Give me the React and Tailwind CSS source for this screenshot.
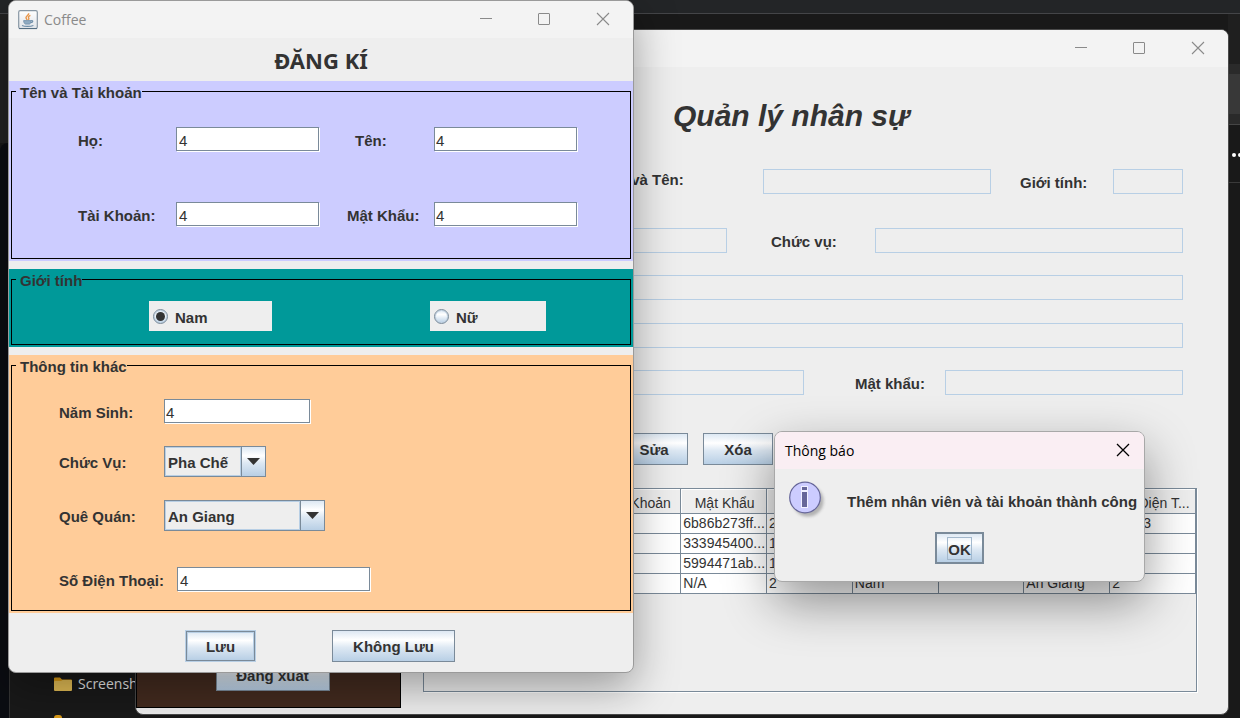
import React from "react";

const metal = "bg-[linear-gradient(180deg,#dde8f3_0%,#ffffff_30%,#dde8f3_55%,#b8cfe5_100%)]";
const metalButton = "border border-[#7a8a99] pt-0.5 font-bold " + metal;
const disabledField = "h-[25px] min-w-0 border border-[#b8cfe5] bg-transparent";

function WindowControls() {
  return (
    <div className="flex items-center self-start text-[#8a8a8a]">
      <button aria-label="Minimize" className="flex h-[35px] w-[58px] items-center justify-center">
        <svg width="14" height="14" viewBox="0 0 14 14" fill="none" stroke="currentColor">
          <path d="M1 6.500h12" />
        </svg>
      </button>
      <button aria-label="Maximize" className="flex h-[35px] w-[58px] items-center justify-center">
        <svg width="14" height="14" viewBox="0 0 14 14" fill="none" stroke="currentColor">
          <rect x="1.5" y="1.5" width="11" height="11" rx="0.5" />
        </svg>
      </button>
      <button aria-label="Close" className="flex h-[35px] w-[60px] items-center justify-center">
        <svg width="14" height="14" viewBox="0 0 14 14" fill="none" stroke="currentColor" strokeWidth="1.1">
          <path d="M1 1l12 12M13 1L1 13" />
        </svg>
      </button>
    </div>
  );
}

function JavaIcon() {
  return (
    <svg width="20" height="20" viewBox="0 0 20 20" fill="none">
      <defs>
        <linearGradient id="javaTile" x1="0" y1="0" x2="0" y2="1">
          <stop offset="0" stopColor="#ffffff" />
          <stop offset="1" stopColor="#dfe3e8" />
        </linearGradient>
      </defs>
      <rect x="0.7" y="0.7" width="18.6" height="17.8" rx="1.5" fill="url(#javaTile)" stroke="#8796a3" strokeWidth="1.2" />
      <path d="M1 18.6h18" stroke="#4f6b80" strokeWidth="1" />
      <path d="M10.6 3.2c.8 1.7-2.6 2.6-2.6 4.4 0 1 .8 1.5 1.2 2.4M12.4 5.4c-1.7.7-2.4 1.5-1.7 2.6.5.7.3 1.3-.5 1.9" stroke="#e8964a" strokeWidth="1.4" />
      <path d="M5.6 10.6h7.6c-.1 2-.9 3.2-1.7 3.5H7.4c-1-.4-1.700-1.600-1.800-3.500z" fill="#8fabc2" stroke="#6d8da8" strokeWidth=".8" />
      <path d="M13.2 10.600c2.200-.5 2.300 1.700-.7 2.200M4 15.500c2.600 1.200 8.400 1.200 11.400 0" stroke="#6d8da8" strokeWidth="1.100" />
    </svg>
  );
}

function FolderIcon() {
  return (
    <svg width="18" height="15" viewBox="0 0 18 15" className="shrink-0">
      <path d="M0 1.500Q0 .5 1 .5h5l2 2h9q1 0 1 1V8H0z" fill="#d99a17" />
      <path d="M0 5q0-1 1-1h6l1.600-1H17q1 0 1 1v9q0 1-1 1H1q-1 0-1-1z" fill="#e3bd55" />
    </svg>
  );
}

function InfoIcon() {
  return (
    <svg width="38" height="38" viewBox="0 0 38 38" className="shrink-0">
      <defs>
        <filter id="infoBlur">
          <feGaussianBlur stdDeviation="1.5" />
        </filter>
      </defs>
      <circle cx="19" cy="20" r="15.5" fill="#777" opacity=".5" filter="url(#infoBlur)" />
      <circle cx="16" cy="16.500" r="15.300" fill="#ccccff" stroke="#666699" strokeWidth="1.200" />
      <path d="M12 5h7v5h-7zM12 10h7v17h-7z" fill="#f0f0ff" />
      <path d="M13 6h5v3h-5zM13 11h5v15h-5z" fill="#666699" />
    </svg>
  );
}

function TextField({ id, value, className }) {
  return (
    <input
      id={id}
      type="text"
      defaultValue={value}
      className={"h-6 border border-[#7a8a99] bg-white pt-0.5 shadow-[1px_1px_0_#ffffff] outline-none " + className}
    />
  );
}

function Combo({ id, value, className }) {
  return (
    <div className={"relative h-[31px] " + className}>
      <select
        id={id}
        defaultValue={value}
        className="h-full w-full appearance-none border border-[#7a8a99] bg-[#eeeeee] pt-0.5 pl-[3px] font-bold outline-none"
      >
        <option>{value}</option>
      </select>
      <span className="pointer-events-none absolute inset-y-px right-[25px] left-px border border-[#b8cfe5]" />
      <span className={"pointer-events-none absolute inset-y-0 right-0 flex w-[25px] items-center justify-center border border-[#7a8a99] " + metal}>
        <svg width="13" height="7" viewBox="0 0 13 7" fill="#333333">
          <path d="M0 0h13L6.500 7z" />
        </svg>
      </span>
    </div>
  );
}

function Radio({ id, text, checked, className }) {
  return (
    <label htmlFor={id} className={"flex h-[30px] items-center gap-[7px] bg-[#eeeeee] pl-1 font-bold " + className}>
      <input
        id={id}
        type="radio"
        name="gender"
        defaultChecked={checked}
        className="flex size-[15px] appearance-none items-center justify-center rounded-full border border-[#7a8a99] bg-[linear-gradient(180deg,#dde8f3,#ffffff_35%,#b8cfe5)] shadow-[inset_0_0_0_1px_#c3d3e3] before:size-[9px] before:rounded-full checked:before:bg-[#333333]"
      />
      <span className="pt-[3px]">{text}</span>
    </label>
  );
}

function Group({ title, className, children }) {
  return (
    <div className={"px-0.5 pb-0.5 " + className}>
      <fieldset className="min-w-0 border border-black">
        <legend className="ml-1 pt-[3px] pl-1 leading-[17px] font-bold">{title}</legend>
        {children}
      </fieldset>
    </div>
  );
}

const columns = ["Họ", "Tên", "Tài Khoản", "Mật Khẩu", "Năm Sinh", "Giới Tính", "Chức Vụ", "Quê Quán", "Số Điện T..."];
const rows = [
  ["", "", "", "6b86b273ff...", "2", "", "", "", "12123"],
  ["", "", "", "333945400...", "1", "", "", "", ""],
  ["", "", "", "5994471ab...", "1", "", "", "", ""],
  ["", "", "", "N/A", "2", "Nam", "", "An Giang", "2"],
];

function Desktop() {
  return (
    <div className="absolute inset-0 flex flex-col">
      <div className="h-3.5 border-b border-[#444548] bg-[#232527]" />
      <div className="flex flex-1 justify-between bg-[#191919]">
        <div className="flex w-[144px] flex-col">
          <div className="h-[129px] bg-[#222222]" />
          <div className="flex flex-1">
            <div className="w-[9px] shrink-0 rounded-tl-lg bg-[#0b0d12]" />
            <div className="flex flex-1 flex-col justify-end border-l border-[#333333]">
              <div className="flex items-center gap-1.5 pl-11 whitespace-nowrap text-[#e6e6e6]">
                <FolderIcon />
                <span className="font-['Open_Sans',sans-serif] text-sm leading-5">Screenshots</span>
              </div>
              <div className="mt-[21px] ml-11 h-[3px] w-2 rounded-t-sm bg-[#d99a17]" />
            </div>
          </div>
        </div>
        <div className="w-3">
          <div className="h-[50px] bg-[#1f1f1f]" />
          <div className="h-2.5 bg-[#2a2a2a]" />
          <div className="h-10 bg-[#383838]" />
          <div className="h-[11px] border-b border-[#454545] bg-[#2a2a2a]" />
          <div className="flex h-[58px] items-center gap-0.5 overflow-hidden border-b border-[#3a3a3a] pt-0.5 pl-1">
            <span className="size-1 shrink-0 rounded-full bg-white" />
            <span className="size-1 shrink-0 rounded-full bg-white" />
          </div>
        </div>
      </div>
    </div>
  );
}

function StaffWindow() {
  return (
    <section className="absolute top-[29px] right-[11px] bottom-[3px] left-[135px] flex flex-col overflow-hidden rounded-lg border border-[#4a4a4a] bg-[#eeeeee]">
      <header className="flex h-[37px] justify-end bg-[#f3f3f3]">
        <WindowControls />
      </header>
      <div className="flex min-h-0 flex-1">
        <aside className="mb-1.5 flex w-[265px] flex-col items-center justify-end border border-black bg-[#432b1f] pb-4 pl-2">
          <button className={"h-8 w-[114px] " + metalButton}>Đăng xuất</button>
        </aside>
        <main className="flex min-w-0 flex-1 flex-col pr-[31px] pb-[22px] pl-[22px]">
          <h1 className="mt-[29px] ml-[250px] text-[30px] leading-10 font-bold italic">Quản lý nhân sự</h1>
          <form className="mt-[33px] mr-3.5 ml-3.5 flex flex-col gap-[22px] font-bold">
            <div className="mb-3 ml-[170px] flex items-center">
              <label htmlFor="fullName" className="w-[156px] pb-[3px]">Họ và Tên:</label>
              <input id="fullName" disabled className={"flex-1 " + disabledField} />
              <label htmlFor="sex" className="ml-[29px] w-[93px] pt-0.5">Giới tính:</label>
              <input id="sex" disabled className={"w-[70px] " + disabledField} />
            </div>
            <div className="ml-[123px] flex items-center">
              <input aria-label="Năm sinh" disabled className={"w-[167px] " + disabledField} />
              <label htmlFor="role" className="ml-11 w-[104px] pt-0.5">Chức vụ:</label>
              <input id="role" disabled className={"flex-1 " + disabledField} />
            </div>
            <div className="mb-px ml-[123px] flex">
              <input aria-label="Quê quán" disabled className={"flex-1 " + disabledField} />
            </div>
            <div className="ml-[123px] flex">
              <input aria-label="Số điện thoại" disabled className={"flex-1 " + disabledField} />
            </div>
            <div className="ml-[123px] flex items-center">
              <input aria-label="Tài khoản" disabled className={"flex-1 " + disabledField} />
              <label htmlFor="pass" className="ml-[51px] w-[90px] pt-0.5">Mật khẩu:</label>
              <input id="pass" disabled className={"w-[238px] " + disabledField} />
            </div>
          </form>
          <div className="mt-[38px] ml-[197px] flex gap-[15px]">
            <button className={"h-8 w-[68px] " + metalButton}>Sửa</button>
            <button className={"h-8 w-[70px] " + metalButton}>Xóa</button>
          </div>
          <div className="mt-[23px] min-h-0 flex-1 border border-[#7a8a99] text-sm shadow-[1px_1px_0_#ffffff]">
            <table className="w-full table-fixed border-separate border-spacing-0">
              <thead>
                <tr className="h-[25px]">
                  {columns.map((name) => (
                    <th key={name} className="border-r border-b border-[#7a8a99] p-0 pt-1 pl-0.5 leading-5 font-normal whitespace-nowrap shadow-[inset_1px_1px_0_#ffffff]">
                      {name}
                    </th>
                  ))}
                </tr>
              </thead>
              <tbody>
                {rows.map((cells, r) => (
                  <tr key={r} className="h-5 bg-white">
                    {cells.map((cell, c) => (
                      <td key={c} className="border-r border-b border-[#7a8a99] p-0 pl-0.5 leading-[19px] whitespace-nowrap">
                        {cell}
                      </td>
                    ))}
                  </tr>
                ))}
              </tbody>
            </table>
          </div>
        </main>
      </div>
    </section>
  );
}

function RegisterWindow() {
  return (
    <section className="absolute top-0 left-2 w-[626px] overflow-hidden rounded-lg border border-[#9a9a9a] bg-[#eeeeee] shadow-[0_14px_44px_rgba(0,0,0,0.36)]">
      <header className="flex h-[37px] items-center justify-between bg-[#f3f3f3] pl-[9px]">
        <div className="flex items-center gap-1.5 font-['Open_Sans',sans-serif] text-sm text-[#8a8a8a]">
          <JavaIcon />
          <span>Coffee</span>
        </div>
        <WindowControls />
      </header>
      <h2 className="pt-[3px] pb-px text-center font-['Noto_Sans',sans-serif] text-[22px] leading-[39px] font-bold">ĐĂNG KÍ</h2>
      <form className="flex flex-col gap-2">
        <Group title="Tên và Tài khoản" className="bg-[#ccccff]">
          <div className="grid grid-cols-[98px_143px_115px_143px] items-center gap-y-[51px] pt-[26px] pb-8 pl-[66px] font-bold">
            <label htmlFor="lastName" className="pt-[3px]">Họ:</label>
            <TextField id="lastName" value="4" className="pl-0.5 font-normal" />
            <label htmlFor="firstName" className="ml-9 pt-[3px]">Tên:</label>
            <TextField id="firstName" value="4" className="pl-px font-normal" />
            <label htmlFor="account" className="pt-[3px]">Tài Khoản:</label>
            <TextField id="account" value="4" className="pl-0.5 font-normal" />
            <label htmlFor="password" className="ml-7 pt-[3px]">Mật Khẩu:</label>
            <TextField id="password" value="4" className="pl-px font-normal" />
          </div>
        </Group>
        <Group title="Giới tính" className="bg-[#009999]">
          <div className="flex gap-[158px] pt-3 pb-[13px] pl-[137px]">
            <Radio id="male" text="Nam" checked className="w-[123px]" />
            <Radio id="female" text="Nữ" className="w-[116px]" />
          </div>
        </Group>
        <Group title="Thông tin khác" className="bg-[#ffcc99]">
          <div className="flex flex-col gap-[23px] pt-6 pb-[19px] pl-[47px] font-bold">
            <div className="flex items-center">
              <label htmlFor="birth" className="w-[105px] pt-[3px]">Năm Sinh:</label>
              <TextField id="birth" value="4" className="w-[146px] pl-px font-normal" />
            </div>
            <div className="flex items-center">
              <label htmlFor="job" className="w-[105px] pt-0.5">Chức Vụ:</label>
              <Combo id="job" value="Pha Chế" className="w-[102px]" />
            </div>
            <div className="flex items-center">
              <label htmlFor="home" className="w-[105px] pt-0.5">Quê Quán:</label>
              <Combo id="home" value="An Giang" className="w-[161px]" />
            </div>
            <div className="mt-[13px] flex items-center">
              <label htmlFor="phone" className="w-[118px] pt-[3px]">Số Điện Thoại:</label>
              <TextField id="phone" value="4" className="w-[193px] pl-0.5 font-normal" />
            </div>
          </div>
        </Group>
        <div className="flex items-center gap-[77px] pt-[9px] pb-2.5 pl-[177px]">
          <button type="button" className={"h-[30px] w-[69px] shadow-[0_0_0_1px_#b8cfe5,inset_0_0_0_1px_#b8cfe5] " + metalButton}>Lưu</button>
          <button type="button" className={"h-8 w-[123px] " + metalButton}>Không Lưu</button>
        </div>
      </form>
    </section>
  );
}

function NoticeDialog() {
  return (
    <section role="dialog" aria-labelledby="noticeTitle" className="absolute top-[431px] left-[774px] w-[371px] overflow-hidden rounded-lg border border-[#a8a8a8] bg-[#eeeeee] shadow-[0_20px_50px_rgba(0,0,0,0.42)]">
      <header className="flex h-[37px] items-center justify-between bg-[#faeef3] pr-3.5 pl-2.5 text-black">
        <h2 id="noticeTitle" className="font-['Open_Sans',sans-serif] text-sm">Thông báo</h2>
        <button aria-label="Close" className="pb-0.5">
          <svg width="14" height="14" viewBox="0 0 14 14" fill="none" stroke="currentColor" strokeWidth="1.300">
            <path d="M1 1l12 12M13 1L1 13" />
          </svg>
        </button>
      </header>
      <div className="flex gap-5 pt-3 pl-3.5">
        <InfoIcon />
        <p className="pt-[11px] font-bold whitespace-nowrap">Thêm nhân viên và tài khoản thành công</p>
      </div>
      <div className="flex justify-center pt-[13px] pb-[17px]">
        <button className={"flex h-8 w-[49px] items-center justify-center border-2 border-[#7a8a99] font-bold " + metal}>
          <span className="border border-[#a3b8cc] pt-0.5 leading-[19px]">OK</span>
        </button>
      </div>
    </section>
  );
}

export default function App() {
  return (
    <div className="relative min-h-screen overflow-hidden bg-[#191919] font-['Liberation_Sans',Arial,sans-serif] text-[15px] leading-5 text-[#333333]">
      <Desktop />
      <StaffWindow />
      <RegisterWindow />
      <NoticeDialog />
    </div>
  );
}
